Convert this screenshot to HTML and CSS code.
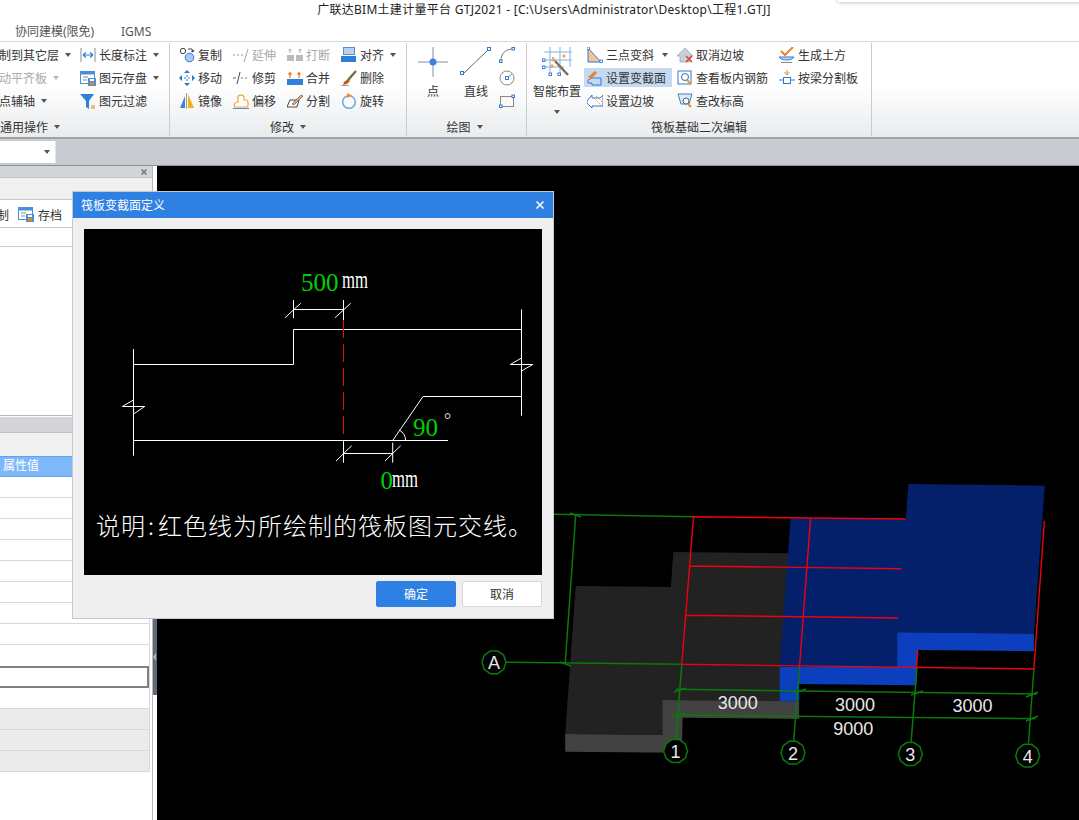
FILE: index.html
```html
<!DOCTYPE html>
<html lang="zh">
<head>
<meta charset="utf-8">
<title>广联达BIM土建计量平台 GTJ2021</title>
<link rel="stylesheet" href="styles.css">
</head>
<body>
<div class="app">
  <div class="corner-shadow"></div>
  <header class="titlebar">广联达BIM土建计量平台 GTJ2021 - [C:\Users\Administrator\Desktop\工程1.GTJ]</header>
  <nav class="tabs"><span class="tab-a">协同建模(限免)</span><span class="tab-b">IGMS</span></nav>

  <section class="ribbon">
    <div class="group g1">
      <div class="grid">
        <div class="tool clip"><span>制到其它层</span><i class="caret"></i></div>
        <div class="tool"><svg class="ic" viewBox="0 0 16 16"><path d="M1 1v14M15 1v14" stroke="#8a8f96" fill="none"/><path d="M3 8h10M3 8l3-2.5M3 8l3 2.5M13 8l-3-2.5M13 8l-3 2.5" stroke="#2e7bd6" stroke-width="1.2" fill="none"/></svg><span>长度标注</span><i class="caret"></i></div>
        <div class="tool off clip"><span>动平齐板</span><i class="caret lite"></i></div>
        <div class="tool"><svg class="ic" viewBox="0 0 16 16"><rect x="0.500" y="1.500" width="14" height="12" fill="#fff" stroke="#4a90d9"/><rect x="0.500" y="1.500" width="14" height="3" fill="#4a90d9"/><path d="M3 7h5M3 10h4" stroke="#888"/><rect x="8" y="8" width="8" height="8" fill="#4a90d9"/><rect x="10" y="12" width="4" height="3" fill="#f08020"/><rect x="10" y="9" width="4" height="2" fill="#fff"/></svg><span>图元存盘</span><i class="caret"></i></div>
        <div class="tool clip"><span>点辅轴</span><i class="caret"></i></div>
        <div class="tool"><svg class="ic" viewBox="0 0 16 16"><path d="M0 1h14L9 8v8L6 14V8z" fill="#2f80d8"/><path d="M11 13h4M11 15h4" stroke="#f08020"/></svg><span>图元过滤</span></div>
      </div>
      <div class="glabel left">通用操作<i class="caret"></i></div>
    </div>

    <div class="group g2">
      <div class="grid">
        <div class="tool"><svg class="ic" viewBox="0 0 16 16"><circle cx="4" cy="4" r="2.7" fill="#fff" stroke="#444"/><circle cx="10.500" cy="10.500" r="4.300" fill="#a9cdf0" stroke="#2e7bd6"/><path d="M9 2h4l1 3M12 4l2 1 1-2" stroke="#444" fill="none"/></svg><span>复制</span></div>
        <div class="tool off"><svg class="ic" viewBox="0 0 16 16"><path d="M0 8h2M4 8h2M8 8h2" stroke="#999"/><path d="M11 15l4-13" stroke="#aaa"/></svg><span>延伸</span></div>
        <div class="tool off"><svg class="ic" viewBox="0 0 16 16"><rect x="0" y="8" width="7" height="6" fill="#bbb"/><rect x="9" y="8" width="7" height="6" fill="#bbb"/><path d="M3 2v4M1.500 3.500L3 2l1.500 1.500M13 2v4M11.500 3.500L13 2l1.500 1.500" stroke="#aaa" fill="none"/></svg><span>打断</span></div>
        <div class="tool"><svg class="ic" viewBox="0 0 16 16"><rect x="2.500" y="0.500" width="11" height="7" fill="#b6d2ee" stroke="#5a8fc4"/><rect x="0" y="9" width="15" height="6" fill="#2f7fd6"/></svg><span>对齐</span><i class="caret"></i></div>

        <div class="tool"><svg class="ic" viewBox="0 0 16 16"><path d="M8 1v14M1 8h14" stroke="#2e7bd6" stroke-dasharray="2 2" fill="none"/><path d="M8 0l3 3H5zM8 16l3-3H5zM0 8l3-3v6zM16 8l-3-3v6z" fill="#2278d8"/></svg><span>移动</span></div>
        <div class="tool"><svg class="ic" viewBox="0 0 16 16"><path d="M0 8h3" stroke="#555"/><path d="M4 14l3-12" stroke="#444"/><path d="M8 8h2M12 8h2" stroke="#777"/></svg><span>修剪</span></div>
        <div class="tool"><svg class="ic" viewBox="0 0 16 16"><rect x="0" y="9" width="16" height="6" fill="#2f80d8"/><path d="M3 8V3M1.500 4.500L3 2.500l1.500 2M12 8V3M10.500 4.500L12 2.500l1.500 2" stroke="#f08020" fill="none" stroke-width="1.300"/></svg><span>合并</span></div>
        <div class="tool"><svg class="ic" viewBox="0 0 16 16"><path d="M15 1L7 10" stroke="#7a6a50" stroke-width="2.500"/><path d="M7 9l2 2-3 3-4 1 1-3z" fill="#c05a20"/><path d="M0 16h8" stroke="#444"/></svg><span>删除</span></div>

        <div class="tool"><svg class="ic" viewBox="0 0 16 16"><path d="M1 15L6 3v12z" fill="#3b83d8"/><path d="M9 1v14h6z" fill="#f2ae1c"/><path d="M7.500 0v16" stroke="#999"/></svg><span>镜像</span></div>
        <div class="tool"><svg class="ic" viewBox="0 0 16 16"><path d="M2 14c-2-3 1-5 3-5V4c0-2 5-3 6 0v3h2c2 0 3 5 1 7z" fill="#fff" stroke="#f0a830" stroke-width="1.200"/><path d="M0 15.500h16" stroke="#4a8ed8"/></svg><span>偏移</span></div>
        <div class="tool"><svg class="ic" viewBox="0 0 16 16"><path d="M3 7h9l-2 7H0z" fill="#fff" stroke="#444"/><path d="M5 11l9-9 2 1-9 9z" fill="#e8a070" stroke="#555" stroke-width=".6"/></svg><span>分割</span></div>
        <div class="tool"><svg class="ic" viewBox="0 0 16 16"><circle cx="8" cy="9" r="6.300" fill="none" stroke="#6fa6dc" stroke-width="1.500"/><path d="M6 0l5 2.500L6 5z" fill="#f09020"/></svg><span>旋转</span></div>
      </div>
      <div class="glabel">修改<i class="caret"></i></div>
    </div>

    <div class="group g3">
      <div class="draw">
        <div class="big big-point">
          <svg width="30" height="30" viewBox="0 0 30 30"><path d="M15 0v30M0 15h30" stroke="#7f8f9f"/><circle cx="15" cy="15" r="3.500" fill="#3b82e0"/></svg>
          <span>点</span>
        </div>
        <div class="big big-line">
          <svg width="32" height="30" viewBox="0 0 32 30"><path d="M3 27L29 2" stroke="#666"/><rect x="0.500" y="24.500" width="3" height="3" fill="#fff" stroke="#2e7bd6"/><rect x="27.500" y="0.500" width="3" height="3" fill="#fff" stroke="#2e7bd6"/></svg>
          <span>直线</span>
        </div>
        <div class="mini">
          <svg width="16" height="16" viewBox="0 0 16 16"><path d="M2 14C2 6 7 2 14 2" stroke="#777" fill="none"/><rect x="0.500" y="13" width="2.500" height="2.500" fill="#fff" stroke="#2e7bd6"/><rect x="13" y="0.500" width="2.500" height="2.500" fill="#fff" stroke="#2e7bd6"/></svg>
          <svg width="16" height="16" viewBox="0 0 16 16"><circle cx="8" cy="8" r="7" fill="none" stroke="#888"/><path d="M8 8l5-4" stroke="#888"/><rect x="6.500" y="6.500" width="3" height="3" fill="#fff" stroke="#2e7bd6"/></svg>
          <svg width="16" height="16" viewBox="0 0 16 16"><rect x="1.500" y="3.500" width="13" height="10" fill="none" stroke="#888"/><rect x="0.500" y="12" width="2.500" height="2.500" fill="#fff" stroke="#2e7bd6"/><rect x="13" y="2" width="2.500" height="2.500" fill="#fff" stroke="#2e7bd6"/></svg>
        </div>
      </div>
      <div class="glabel shift">绘图<i class="caret"></i></div>
    </div>

    <div class="group g4">
      <div class="g4-body">
        <div class="big big-smart">
          <svg width="30" height="30" viewBox="0 0 30 30"><path d="M8 0v29M18 0v29M28 0v20M2 5h28M2 13h28M2 20h20" stroke="#7fb0e6" fill="none"/><rect x="0.500" y="12" width="2.500" height="2.500" fill="#fff" stroke="#3b82d8"/><rect x="0.500" y="19" width="2.500" height="2.500" fill="#fff" stroke="#3b82d8"/><rect x="7" y="26" width="2.500" height="2.500" fill="#fff" stroke="#3b82d8"/><rect x="16" y="26" width="2.500" height="2.500" fill="#fff" stroke="#3b82d8"/><path d="M13 14L26 28" stroke="#8a6a50" stroke-width="2.500"/><path d="M11 10l2 3-3 1zM20 9h4M22 7v4M8 19h4M10 17v4" stroke="#f09030" fill="none"/></svg>
          <span>智能布置</span>
          <i class="caret"></i>
        </div>
        <div class="grid">
          <div class="tool"><svg class="ic" viewBox="0 0 16 16"><path d="M1 1v14h13z" fill="#f6c29a" stroke="#2e7bd6"/><rect x="0" y="0" width="2.500" height="2.500" fill="#fff" stroke="#2e7bd6" stroke-width=".8"/><rect x="13" y="13" width="2.500" height="2.500" fill="#fff" stroke="#2e7bd6" stroke-width=".8"/></svg><span>三点变斜</span><i class="caret wide"></i></div>
          <div class="tool"><svg class="ic" viewBox="0 0 16 16"><path d="M0 9L8 1l8 8h-3v6H3V9z" fill="#c9d0d8" stroke="#8a97a5" stroke-width=".6"/><path d="M9 9l6 6M15 9l-6 6" stroke="#e0402a" stroke-width="1.500"/></svg><span>取消边坡</span></div>
          <div class="tool"><svg class="ic" viewBox="0 0 16 16"><path d="M2 4l4 4 8-8" fill="none" stroke="#f08020" stroke-width="2"/><path d="M0 10c2 4 13 4 15 0z" fill="#bcd6f1" stroke="#2e7bd6"/><path d="M2 15.500h11" stroke="#888"/></svg><span>生成土方</span></div>

          <div class="tool hi"><svg class="ic" viewBox="0 0 16 16"><path d="M1 10l4-2h9v7H5v-2H1z" fill="none" stroke="#2e7bd6"/><path d="M1 7L8 1l2 2-6 6z" fill="#f08020"/></svg><span>设置变截面</span></div>
          <div class="tool"><svg class="ic" viewBox="0 0 16 16"><rect x="1" y="1" width="13" height="13" fill="none" stroke="#2e7bd6"/><circle cx="8" cy="7" r="3.500" fill="#fff" stroke="#4a6a8a"/><path d="M10 10l4 4" stroke="#f09020" stroke-width="2"/></svg><span>查看板内钢筋</span></div>
          <div class="tool"><svg class="ic" viewBox="0 0 16 16"><path d="M8 0v4M5.500 2L8 5l2.500-3" stroke="#f08020" fill="none"/><rect x="4.500" y="7.500" width="7" height="6" fill="#fff" stroke="#2e7bd6"/><path d="M0 10h4M12 10h4" stroke="#2e7bd6"/></svg><span>按梁分割板</span></div>

          <div class="tool"><svg class="ic" viewBox="0 0 16 16"><path d="M0 8l5-6v3h8l3-3v11H5v2l-5-5z" fill="#fff" stroke="#2e7bd6"/><path d="M7 5l8 8M9 3l6 6" stroke="#f09020" stroke-dasharray="1.500 1"/></svg><span>设置边坡</span></div>
          <div class="tool"><svg class="ic" viewBox="0 0 16 16"><path d="M1 1h14l-3 10H4z" fill="#dfe9f3" stroke="#4a7fb5"/><circle cx="9" cy="8" r="3" fill="#fff" stroke="#4a6a8a"/><path d="M11 11l3 3" stroke="#f09020" stroke-width="2"/></svg><span>查改标高</span></div>
          <div></div>
        </div>
      </div>
      <div class="glabel">筏板基础二次编辑</div>
    </div>
  </section>

  <div class="strip"><div class="combo"><i class="caret"></i></div></div>

  <main class="main">
    <aside class="panel">
      <div class="panel-inner">
        <div class="phead"><svg class="px" viewBox="0 0 6 6"><path d="M0.500 0.500l5 5M5.500 0.500l-5 5"/></svg></div>
        <div class="pgrey"></div>
        <div class="ptools"><span class="cut">制</span><svg class="ic" viewBox="0 0 16 16"><rect x="0.500" y="1.500" width="14" height="12" fill="#fff" stroke="#4a90d9"/><rect x="0.500" y="1.500" width="14" height="3" fill="#4a90d9"/><path d="M3 7h5M3 10h4" stroke="#888"/><rect x="8" y="8" width="8" height="8" fill="#4a90d9"/><rect x="10" y="12" width="4" height="3" fill="#f08020"/><rect x="10" y="9" width="4" height="2" fill="#fff"/></svg><span class="save">存档</span></div>
        <div class="plist-head"></div>
        <div class="plist"></div>
        <div class="phead second"></div>
        <div class="pgrey tall"></div>
        <div class="props">
          <div class="prow head">属性值</div>
          <div class="prow"></div><div class="prow"></div><div class="prow"></div><div class="prow"></div>
          <div class="prow"></div><div class="prow"></div><div class="prow"></div><div class="prow"></div><div class="prow last"></div>
          <div class="prow sel"></div>
          <div class="prow"></div>
          <div class="prow alt"></div><div class="prow alt"></div><div class="prow alt"></div>
        </div>
      </div>
      <div class="splitter"><div class="grip"><i></i></div></div>
    </aside>

    <div class="canvas">
      <svg class="scene" viewBox="157 166 922 654">
        <polygon fill="#222222" points="673.300,552 788.700,553.300 779.800,701.300 662.400,700 662.400,735 565.200,734 575.700,586 670.900,587"/>
        <polygon fill="#424242" points="565.200,734 662.400,735 662.400,700 799.200,701.300 799.200,719 682.600,717.700 681.800,752.700 565.200,751.700"/>
        <polygon fill="#04206a" points="790.600,518.300 905.700,519.300 908.400,484 1044.800,485.700 1033.900,633.700 897.100,632.300 897.100,666.700 779.800,666"/>
        <polygon fill="#0b3fbd" points="897.100,632.300 1033.900,633.700 1033.900,651.300 917.700,650 916.200,685.300 799.200,684 799.200,701.300 779.800,701.300 779.800,666.700 897.100,666.700"/>

        <g class="green">
          <path d="M554 514.300L693.500 516.700M575.700 515L565.200 663.300M505.800 662.300L681.800 664.300"/>
          <path d="M681.800 664.300L676 739.300M799.600 665.700L793.700 740.700M917 667.300L911.100 742M1033.900 669L1028.500 743.300"/>
          <path d="M676 689.300L1037.400 694M674 715L1035.500 718.700"/>
          <path d="M570 513l11 4M560 662l11 4M674 692l12-4M794 693l12-4M911 695l12-4M1026 697l12-5M672 717l12-4M1026 721l12-5"/>
        </g>
        <g class="red">
          <path d="M693.500 516.700L905.700 519M1044.400 520.700L1033.900 669L681.800 664.300L693.500 516.700M810.500 519L799.600 665.700M689.600 566L901.400 568.700M685.700 615.300L897.900 618M917.700 650L916.500 667.300"/>
        </g>
        <g class="bubble">
          <polygon transform="translate(494 662.300)" points="12,0 9.700,7 3.700,11.400 -3.700,11.400 -9.700,7 -12,0 -9.700,-7 -3.700,-11.400 3.700,-11.400 9.700,-7"/>
          <polygon transform="translate(675.600 751)" points="12,0 9.700,7 3.700,11.400 -3.700,11.400 -9.700,7 -12,0 -9.700,-7 -3.700,-11.400 3.700,-11.400 9.700,-7"/>
          <polygon transform="translate(793 752.700)" points="12,0 9.700,7 3.700,11.400 -3.700,11.400 -9.700,7 -12,0 -9.700,-7 -3.700,-11.400 3.700,-11.400 9.700,-7"/>
          <polygon transform="translate(910.300 754)" points="12,0 9.700,7 3.700,11.400 -3.700,11.400 -9.700,7 -12,0 -9.700,-7 -3.700,-11.400 3.700,-11.400 9.700,-7"/>
          <polygon transform="translate(1027.700 755.700)" points="12,0 9.700,7 3.700,11.400 -3.700,11.400 -9.700,7 -12,0 -9.700,-7 -3.700,-11.400 3.700,-11.400 9.700,-7"/>
        </g>
        <g class="cad">
          <text x="494" y="669">A</text>
          <text x="675.600" y="758">1</text>
          <text x="793" y="760">2</text>
          <text x="910.300" y="761">3</text>
          <text x="1027.700" y="763">4</text>
          <text x="737.800" y="709">3000</text>
          <text x="855.100" y="711">3000</text>
          <text x="972.500" y="712">3000</text>
          <text x="853.200" y="735">9000</text>
        </g>
      </svg>
    </div>
  </main>

  <div class="dialog">
    <div class="dlg-title"><span>筏板变截面定义</span><svg class="dlg-x" viewBox="0 0 8 8"><path d="M0.500 0.500l7 7M7.500 0.500l-7 7"/></svg></div>
    <div class="dlg-body">
      <svg class="section" viewBox="84 229 458 346">
        <g class="wire">
          <path d="M133.500 349V455.700M133.500 364.500H293.500V329.500H521.500M521.500 309.300V415.700M423 396.500H521.500M133.500 440.500H448"/>
          <path d="M423 396.500L392.700 440.500M399.300 430A13 13 0 0 1 405.700 440.500"/>
          <path d="M293.500 309.500H343.500M293.500 300V318.300M343.500 300V320M285 317.700L300.700 303.300M335 317.700L350.700 303.300"/>
          <path d="M343.500 453.500H392.700M343.500 440V462.700M392.700 442.700V462.700M336 461L351.700 445.700M385 461L400.700 445.700"/>
          <path d="M133.500 400L122.300 406.500H144.700L133.500 414M521.500 358L510.300 364.500H532.700L521.500 371"/>
        </g>
        <path class="cut-line" d="M343.500 320V440"/>
        <text class="num" x="301" y="290.500">500</text>
        <text class="unit" x="342" y="288" textLength="26" lengthAdjust="spacingAndGlyphs">mm</text>
        <text class="num" x="413" y="436">90</text>
        <text class="deg" x="444" y="426">°</text>
        <text class="num" x="380.500" y="489">0</text>
        <text class="unit" x="392" y="487" textLength="26" lengthAdjust="spacingAndGlyphs">mm</text>
        <text class="note" x="96" y="535">说明<tspan x="148">:</tspan><tspan x="158">红色线为所绘制的筏板图元交线。</tspan></text>
      </svg>
    </div>
    <div class="dlg-foot"><button class="btn primary">确定</button><button class="btn">取消</button></div>
  </div>
</div>
</body>
</html>
```

FILE: styles.css
```css
* { box-sizing: border-box; }
html, body { margin: 0; padding: 0; }
body { width: 1079px; height: 820px; overflow: hidden; background: #fff; }
.app {
  position: relative; width: 1079px; height: 820px; overflow: hidden;
  display: flex; flex-direction: column;
  font-family: "Noto Sans", "Noto Sans CJK SC", sans-serif; font-size: 12px; color: #333;
}
.corner-shadow {
  position: absolute; left: 838px; top: -4px; width: 260px; height: 6px;
  background: #fff; box-shadow: 0 0 4px rgba(0,0,0,.35);
}
.titlebar { height: 21px; line-height: 20px; text-align: center; color: #222; padding-left: 9px; white-space: nowrap; letter-spacing: .28px; }
.tabs { height: 20px; display: flex; align-items: center; color: #555; }
.tab-a { margin-left: 15px; width: 106px; }
.ribbon {
  height: 98px; display: flex;
  border-top: 1px solid #d6d8da; border-bottom: 2px solid #9fa2a5;
  background: linear-gradient(#ffffff 45%, #e9ebed);
}
.group {
  height: 93px; margin-top: 1px; display: flex; flex-direction: column; position: relative;
  border-right: 1px solid #c9cbce;
}
.grid { display: grid; grid-auto-rows: 23px; margin-top: 0; }
.g1 { width: 170px; }
.g1 .grid { grid-template-columns: 80px 1fr; }
.g2 { width: 237px; padding-left: 9px; }
.g2 .grid { grid-template-columns: 54px 54px 54px auto; }
.g3 { width: 120px; }
.g4 { width: 345px; }
.tool { display: flex; align-items: center; gap: 3px; white-space: nowrap; height: 23px; }
.tool.off { color: #a8a8a8; }
.tool.clip { margin-left: -1px; }
.tool.hi { position: relative; background: #c5d9f1; height: 19px; margin: 2px 0 2px -3px; padding-left: 3px; width: 88px; }
.ic { width: 16px; height: 16px; flex: none; }
.caret {
  display: inline-block; width: 0; height: 0; flex: none; margin-left: 3px;
  border-left: 3.500px solid transparent; border-right: 3.500px solid transparent; border-top: 4px solid #555;
}
.caret.lite { border-top-color: #b5b5b5; }
.caret.wide { margin-left: 5px; }
.glabel {
  position: absolute; left: 0; right: 0; bottom: -2px; height: 22px;
  display: flex; align-items: center; justify-content: center; gap: 6px; white-space: nowrap;
}
.glabel .caret { margin-left: 0; }
.glabel.left { justify-content: flex-start; }
.glabel.shift { right: 4px; }
.draw { display: flex; padding-top: 4px; }
.big { display: flex; flex-direction: column; align-items: center; }
.big span { margin-top: 5px; white-space: nowrap; }
.big-point { width: 50px; margin-left: 1px; }
.big-line { width: 32px; margin-left: 2px; }
.mini { display: flex; flex-direction: column; gap: 7px; margin-left: 7px; }
.g4-body { display: flex; }
.big-smart { width: 54px; margin-left: 3px; padding-top: 4px; }
.big-smart .caret { margin: 10px 0 0; }
.g4 .grid { margin-left: 3px; grid-template-columns: 90px 102px auto; }
.strip { height: 27px; background: #c8cbcf; border-bottom: 1px solid #8f9295; padding-top: 2px; flex: none; }
.combo {
  width: 56px; height: 22px; background: #fff; border-right: 1px solid #e3e3e3;
  display: flex; align-items: center; justify-content: flex-end; padding-right: 5px;
}
.main { flex: 1; display: flex; min-height: 0; }
.panel { width: 157px; flex: none; display: flex; background: #fff; }
.panel-inner { width: 153px; border-right: 1px solid #b8babd; display: flex; flex-direction: column; }
.phead { height: 12px; background: #d3d5d9; border-bottom: 1px solid #bfc1c4; position: relative; flex: none; }
.px { position: absolute; right: 5px; top: 3px; width: 6px; height: 6px; }
.px path { stroke: #777; stroke-width: 1.500; fill: none; }
.pgrey { height: 22px; background: #f0f0f0; border-bottom: 1px solid #c4c6c9; flex: none; }
.pgrey.tall { height: 23px; border-bottom: 0; }
.ptools { height: 28px; display: flex; align-items: center; border-bottom: 1px solid #c4c6c9; flex: none; }
.cut { margin-left: -3px; width: 21px; flex: none; padding-top: 2px; }
.save { margin-left: 4px; color: #333; padding-top: 2px; }
.plist-head { height: 19px; border-bottom: 1px solid #c9cbcd; flex: none; }
.plist { height: 169px; border-bottom: 1px solid #b5b7ba; flex: none; }
.phead.second { height: 16px; margin-top: 1px; }
.props { width: 150px; border-right: 1px solid #d8d8d8; }
.prow { height: 21px; border-bottom: 1px solid #d8d8d8; background: #fff; }
.prow.head { background: #7fb8f9; color: #fff; padding-left: 3px; line-height: 18px; border-bottom: 1px solid #5fa3ee; border-top: 1px solid #5fa3ee; }
.prow.last { border-bottom: 0; }
.prow.sel { border: 2px solid #808080; border-left: 0; height: 22px; }
.prow.alt { background: #ebebeb; }
.splitter { width: 4px; position: relative; }
.grip { position: absolute; left: 0; right: 0; top: 452px; height: 77px; background: #5f6b78; display: flex; align-items: center; }
.grip i { width: 0; height: 0; border-top: 4px solid transparent; border-bottom: 4px solid transparent; border-right: 3px solid #aeb4ba; }
.canvas { flex: 1; position: relative; background: #000; }
.scene { position: absolute; left: 0; top: 0; width: 922px; height: 654px; display: block; }
.green path { stroke: #0a7a0a; stroke-width: 1.500; fill: none; }
.red path { stroke: #f00010; stroke-width: 1.400; fill: none; }
.bubble polygon { fill: #000; stroke: #0a7a0a; stroke-width: 1.500; }
.cad text { font-family: "Liberation Sans", sans-serif; font-size: 18px; fill: #e8e8e8; text-anchor: middle; }
.dialog {
  position: absolute; left: 72px; top: 191px; width: 482px; height: 428px;
  background: #efefef; border: 1px solid #bfc9da; display: flex; flex-direction: column;
}
.dlg-title {
  height: 26px; background: #2e80e2; color: #fff; flex: none;
  display: flex; align-items: center; justify-content: space-between; padding: 0 9px 0 8px;
}
.dlg-x { width: 8px; height: 8px; flex: none; }
.dlg-x path { stroke: #fff; stroke-width: 1.500; fill: none; }
.dlg-body { padding: 11px 11px 0; flex: none; }
.section { display: block; width: 458px; height: 346px; background: #000; }
.wire path { stroke: #fff; stroke-width: 1; fill: none; }
.cut-line { stroke: #e01010; stroke-width: 1; stroke-dasharray: 18 6; fill: none; }
.num { font-family: "Liberation Serif", serif; font-size: 25px; fill: #00d000; }
.unit { font-family: "Liberation Serif", serif; font-size: 25px; fill: #fff; }
.deg { font-family: "Liberation Serif", serif; font-size: 18px; fill: #ddd; }
.note { font-family: "Noto Sans CJK SC", sans-serif; font-weight: 300; font-size: 24px; letter-spacing: 1px; fill: #fff; }
.dlg-foot { display: flex; justify-content: flex-end; gap: 6px; padding: 6px 11px 0; }
.btn {
  width: 80px; height: 26px; padding: 0; border: 1px solid #d6d6d6; border-radius: 2px; background: #fff;
  font: inherit; color: #333;
}
.btn.primary { background: #2e80e2; border-color: #2e80e2; color: #fff; }
```
